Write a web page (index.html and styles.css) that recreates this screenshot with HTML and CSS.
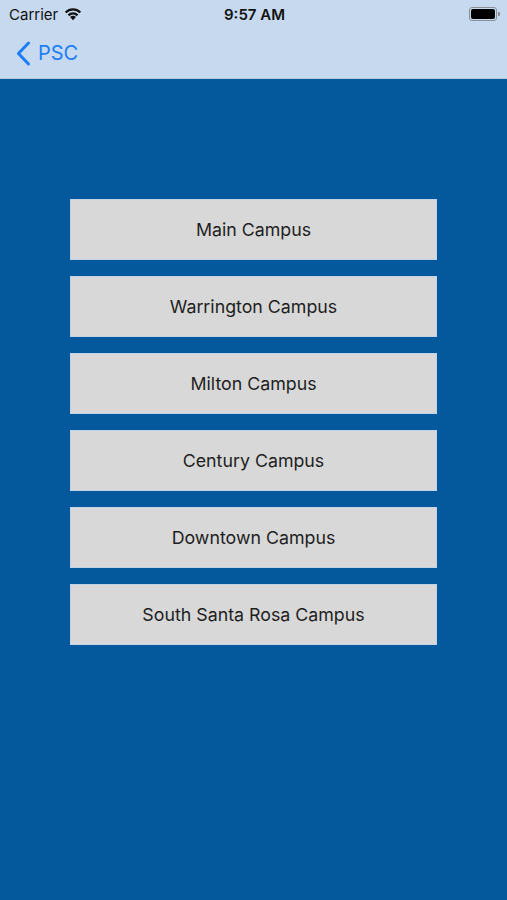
FILE: index.html
```html
<!DOCTYPE html>
<html lang="en">
<head>
    <meta charset="UTF-8">
    <meta name="viewport" content="width=device-width, initial-scale=1.0">
    <title>Campuses - PSC</title>
    <link rel="stylesheet" href="styles.css">
</head>
<body>
    <header class="topbar">
        <div class="status">
            <div class="status-left">
                <span>Carrier</span>
                <svg class="wifi" width="18" height="14" viewBox="0 0 16 12">
                    <path d="M8 11.5 L5.4 8.6 A3.6 3.6 0 0 1 10.6 8.6 Z" fill="#111"/>
                    <path d="M3.3 6.4 A6.6 6.6 0 0 1 12.7 6.4 L11.3 7.9 A4.6 4.6 0 0 0 4.7 7.9 Z" fill="#111"/>
                    <path d="M0.8 3.9 A10 10 0 0 1 15.2 3.9 L13.8 5.4 A8 8 0 0 0 2.2 5.4 Z" fill="#111"/>
                </svg>
            </div>
            <div class="time">9:57 AM</div>
            <div class="status-right">
                <div class="battery"><div class="battery-fill"></div></div>
                <div class="battery-cap"></div>
            </div>
        </div>
        <nav class="navbar">
            <a class="back" href="#">
                <svg width="15" height="25" viewBox="0 0 15 25">
                    <path d="M12.5 2 L2.5 12.5 L12.5 23" fill="none" stroke="#1b7ef4" stroke-width="3" stroke-linecap="round" stroke-linejoin="round"/>
                </svg>
                <span>PSC</span>
            </a>
        </nav>
    </header>

    <main class="content">
        <div class="campus-list">
            <button class="campus">Main Campus</button>
            <button class="campus">Warrington Campus</button>
            <button class="campus">Milton Campus</button>
            <button class="campus">Century Campus</button>
            <button class="campus">Downtown Campus</button>
            <button class="campus">South Santa Rosa Campus</button>
        </div>
    </main>
</body>
</html>
```

FILE: styles.css
```css
html, body {
    margin: 0;
    height: 100%;
    font-family: 'Inter', 'Roboto', sans-serif;
}
body {
    display: flex;
    flex-direction: column;
    background-color: #03599b;
}
.topbar {
    background-color: #c6d9ee;
    border-bottom: 1px solid #b4c8e0;
}
.status {
    height: 28px;
    display: flex;
    align-items: center;
    justify-content: space-between;
    padding: 0 7px 0 9px;
    font-size: 15px;
    color: #111;
}
.status-left {
    flex: 1;
    display: flex;
    align-items: center;
    gap: 6px;
}
.time {
    font-weight: 600;
}
.status-right {
    flex: 1;
    display: flex;
    justify-content: flex-end;
    align-items: center;
}
.battery {
    width: 24px;
    height: 10px;
    border: 1px solid #8a8f96;
    border-radius: 3px;
    padding: 1px;
}
.battery-fill {
    width: 100%;
    height: 100%;
    background-color: #000;
    border-radius: 2px;
}
.battery-cap {
    width: 2px;
    height: 4px;
    margin-left: 1px;
    background-color: #8a8f96;
    border-radius: 0 1px 1px 0;
}
.navbar {
    height: 50px;
    display: flex;
    align-items: center;
    padding-left: 16px;
}
.back {
    display: flex;
    align-items: center;
    gap: 7px;
    color: #1b7ef4;
    text-decoration: none;
    font-size: 20px;
}
.content {
    flex: 1;
    padding-top: 120px;
}
.campus-list {
    width: 367px;
    margin: 0 auto;
    display: flex;
    flex-direction: column;
    gap: 17px;
}
.campus {
    height: 61px;
    padding-top: 0;
    background-color: #d8d8d8;
    border: 1px solid #c2d3e6;
    color: #1e1e1e;
    font-family: inherit;
    font-size: 17.8px;
    cursor: pointer;
}
.campus + .campus {
    margin-top: -1px;
}
.campus:hover {
    background-color: #e2e2e2;
}
```
